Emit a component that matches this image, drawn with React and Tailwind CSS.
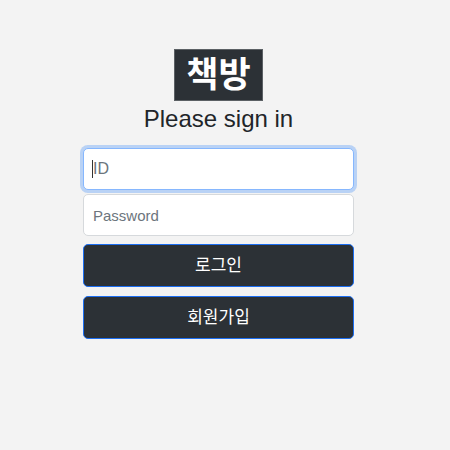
import React from 'react';

const sans = 'font-["Liberation_Sans","Noto_Sans_CJK_KR",sans-serif]';

export default function App() {
  return (
    <div className={`min-h-screen bg-[#f3f3f3] ${sans}`}>
      <div className="w-[437px] flex flex-col items-center pt-[49px]">
        {/* logo */}
        <div className="bg-[#2c3136] border border-[#5b6064] text-white font-bold text-[35px] leading-[50px] px-[11px]">
          책방
        </div>
        <h1 className="text-[24px] leading-[30px] mt-[3px] text-[#212529]">Please sign in</h1>

        <form className="w-[271px] mt-[14px] flex flex-col" onSubmit={(e) => e.preventDefault()}>
          <div className="relative">
            <input
              type="text"
              placeholder="ID"
              className="w-full h-[42px] px-[9px] bg-white border border-[#86b7fe] rounded-[5px] text-[16px] text-[#212529] placeholder:text-[#6c757d] outline-none shadow-[0_0_0_3px_rgba(13,110,253,0.25)]"
            />
            <span className="absolute left-[9px] top-[12px] w-px h-[18px] bg-[#333]" />
          </div>
          <input
            type="password"
            placeholder="Password"
            className="w-full h-[42px] mt-[4px] px-[9px] bg-white border border-[#d6d9dc] rounded-[5px] text-[15px] text-[#212529] placeholder:text-[#6c757d] outline-none"
          />
          <button
            type="submit"
            className="mt-[8px] h-[43px] bg-[#2c3136] border border-[#1c6ef2] rounded-[5px] text-white text-[17px] font-normal"
          >
            로그인
          </button>
          <button
            type="button"
            className="mt-[9px] h-[43px] bg-[#2c3136] border border-[#1c6ef2] rounded-[5px] text-white text-[17px] font-normal"
          >
            회원가입
          </button>
        </form>
      </div>
    </div>
  );
}
